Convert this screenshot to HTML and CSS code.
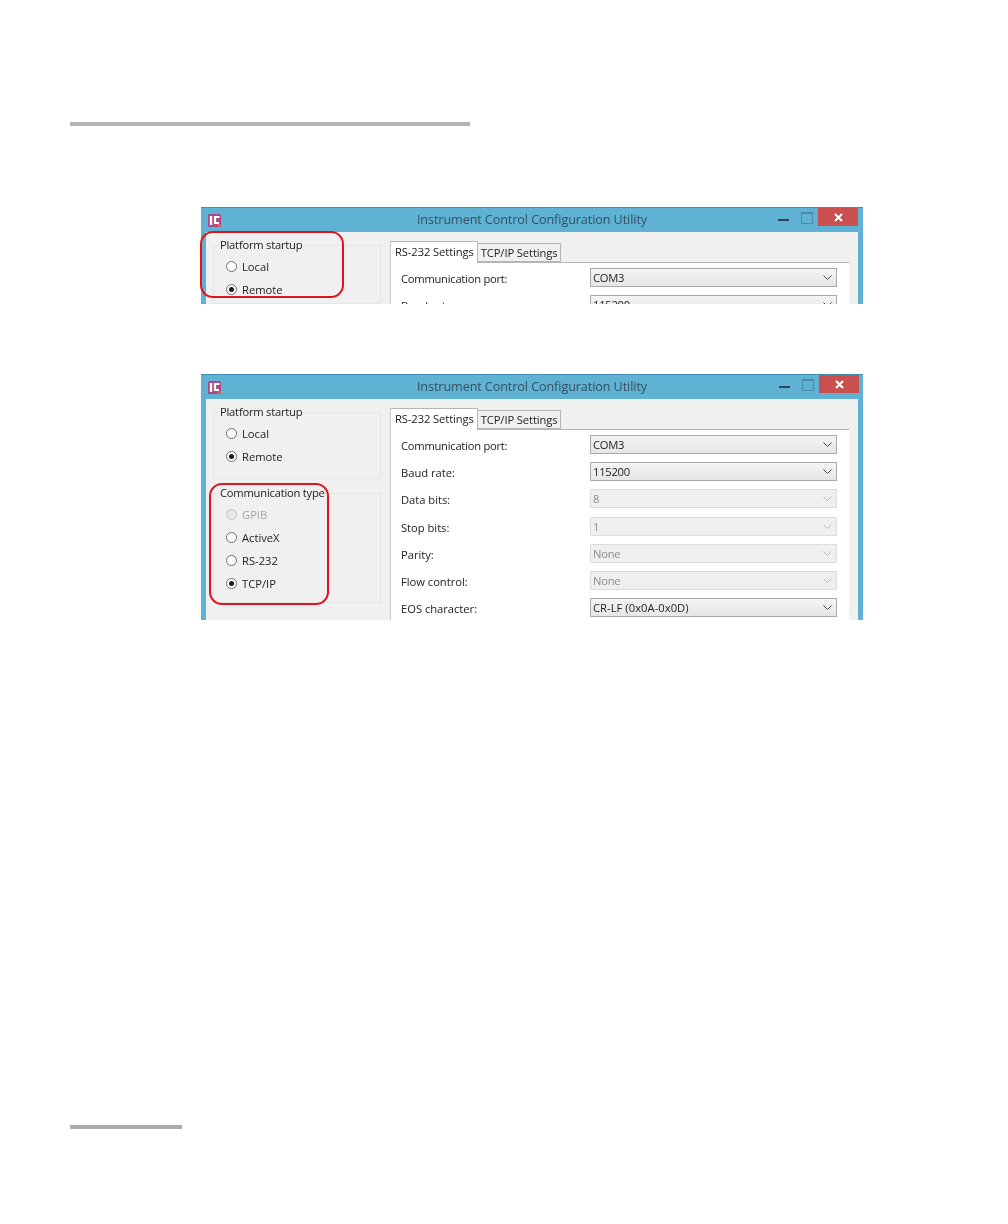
FILE: index.html
```html
<!DOCTYPE html>
<html lang="en">
<head>
<meta charset="utf-8">
<title>Instrument Control Configuration Utility</title>
<link rel="stylesheet" href="styles.css">
</head>
<body>
<main class="page">
  <div class="rule rule-top"></div>

  <section class="window window-short">
    <header class="titlebar">
      <svg class="app-icon" viewBox="0 0 13 13"><rect width="13" height="13" rx="1.5" fill="#a84a86"/><path d="M3 2v9" stroke="#fff" stroke-width="2.4"/><path d="M11.5 3H7v6h4" stroke="#fff" stroke-width="2.2" fill="none"/><circle cx="11" cy="11" r="1.6" fill="#e8703a"/></svg>
      <span class="title">Instrument Control Configuration Utility</span>
      <div class="controls">
        <span class="ctl ctl-min"></span>
        <span class="ctl ctl-max"></span>
        <span class="ctl-close"><svg viewBox="0 0 9 9" width="9" height="9"><path d="M1 1l7 7M8 1L1 8" stroke="#fff" stroke-width="2"/></svg></span>
      </div>
    </header>
    <div class="content">
      <div class="side">
        <fieldset class="group group-platform">
          <legend>Platform startup</legend>
          <div class="radio"><i class="dot"></i>Local</div>
          <div class="radio"><i class="dot on"></i>Remote</div>
        </fieldset>
      </div>
      <div class="tabs">
        <div class="tabstrip">
          <span class="tab active">RS-232 Settings</span>
          <span class="tab">TCP/IP Settings</span>
        </div>
        <div class="panel">
          <div class="row"><label class="tight">Communication port:</label><div class="select">COM3<svg class="chev" viewBox="0 0 9 5"><path d="M.5.5l4 4 4-4" fill="none" stroke="#444"/></svg></div></div>
          <div class="row"><label>Baud rate:</label><div class="select">115200<svg class="chev" viewBox="0 0 9 5"><path d="M.5.5l4 4 4-4" fill="none" stroke="#444"/></svg></div></div>
        </div>
      </div>
    </div>
    <div class="callout callout-a"></div>
  </section>

  <section class="window window-tall">
    <header class="titlebar">
      <svg class="app-icon" viewBox="0 0 13 13"><rect width="13" height="13" rx="1.5" fill="#a84a86"/><path d="M3 2v9" stroke="#fff" stroke-width="2.4"/><path d="M11.5 3H7v6h4" stroke="#fff" stroke-width="2.2" fill="none"/><circle cx="11" cy="11" r="1.6" fill="#e8703a"/></svg>
      <span class="title">Instrument Control Configuration Utility</span>
      <div class="controls">
        <span class="ctl ctl-min"></span>
        <span class="ctl ctl-max"></span>
        <span class="ctl-close"><svg viewBox="0 0 9 9" width="9" height="9"><path d="M1 1l7 7M8 1L1 8" stroke="#fff" stroke-width="2"/></svg></span>
      </div>
    </header>
    <div class="content">
      <div class="side">
        <fieldset class="group group-platform">
          <legend>Platform startup</legend>
          <div class="radio"><i class="dot"></i>Local</div>
          <div class="radio"><i class="dot on"></i>Remote</div>
        </fieldset>
        <fieldset class="group group-comm">
          <legend>Communication type</legend>
          <div class="radio disabled"><i class="dot"></i>GPIB</div>
          <div class="radio"><i class="dot"></i>ActiveX</div>
          <div class="radio"><i class="dot"></i>RS-232</div>
          <div class="radio"><i class="dot on"></i>TCP/IP</div>
        </fieldset>
      </div>
      <div class="tabs">
        <div class="tabstrip">
          <span class="tab active">RS-232 Settings</span>
          <span class="tab">TCP/IP Settings</span>
        </div>
        <div class="panel">
          <div class="row"><label class="tight">Communication port:</label><div class="select">COM3<svg class="chev" viewBox="0 0 9 5"><path d="M.5.5l4 4 4-4" fill="none" stroke="#444"/></svg></div></div>
          <div class="row"><label>Baud rate:</label><div class="select">115200<svg class="chev" viewBox="0 0 9 5"><path d="M.5.5l4 4 4-4" fill="none" stroke="#444"/></svg></div></div>
          <div class="row"><label>Data bits:</label><div class="select off">8<svg class="chev" viewBox="0 0 9 5"><path d="M.5.5l4 4 4-4" fill="none" stroke="#bbb"/></svg></div></div>
          <div class="row"><label>Stop bits:</label><div class="select off">1<svg class="chev" viewBox="0 0 9 5"><path d="M.5.5l4 4 4-4" fill="none" stroke="#bbb"/></svg></div></div>
          <div class="row"><label>Parity:</label><div class="select off">None<svg class="chev" viewBox="0 0 9 5"><path d="M.5.5l4 4 4-4" fill="none" stroke="#bbb"/></svg></div></div>
          <div class="row"><label>Flow control:</label><div class="select off">None<svg class="chev" viewBox="0 0 9 5"><path d="M.5.5l4 4 4-4" fill="none" stroke="#bbb"/></svg></div></div>
          <div class="row"><label>EOS character:</label><div class="select wide">CR-LF (0x0A-0x0D)<svg class="chev" viewBox="0 0 9 5"><path d="M.5.5l4 4 4-4" fill="none" stroke="#444"/></svg></div></div>
        </div>
      </div>
    </div>
    <div class="callout callout-b"></div>
  </section>

  <div class="rule rule-bottom"></div>
</main>
</body>
</html>
```
FILE: styles.css
```css
* { box-sizing: border-box; }
html, body { margin: 0; background: #fff; }
body { font-family: "Open Sans", "Noto Sans", sans-serif; color: #222; }
.page { width: 1008px; height: 1224px; padding: 122px 0 0 70px; display: flex; flex-direction: column; align-items: flex-start; }

.rule { background: #b4b4b4; }
.rule-top { width: 400px; height: 4px; }
.rule-bottom { width: 112px; height: 4px; margin-top: 505px; background: #ababab; }

.window { position: relative; width: 662px; margin-left: 131px; background: #5fb2d3; border-top: 1px solid #3f8fb0; display: flex; flex-direction: column; filter: blur(0.35px); }
.window-short { height: 97px; margin-top: 81px; }
.window-tall { height: 246px; margin-top: 70px; }

.titlebar { height: 24px; flex: none; display: grid; grid-template-columns: 1fr auto 1fr; align-items: center; padding-left: 7px; }
.app-icon { width: 13px; height: 13px; margin-top: 1px; }
.title { font-size: 12.6px; letter-spacing: -0.08px; color: #33505f; margin: -2px 0 0 -7px; }
.controls { justify-self: end; display: flex; align-items: flex-start; align-self: start; height: 18px; }
.window-short .controls { margin-right: 5px; }
.window-tall .controls { margin-right: 4px; }
.ctl { display: block; height: 18px; position: relative; }
.ctl-min { width: 23px; }
.ctl-max { width: 17px; }
.ctl-min::after { content: ""; position: absolute; left: 0; top: 11px; height: 2px; background: #2c4756; width: 11px; }
.ctl-max::after { content: ""; position: absolute; left: 0; top: 4px; width: 10px; height: 9px; border: 1px solid #4d8aa6; border-top-width: 2px; }
.ctl-close { width: 40px; height: 18px; background: #c9504f; display: flex; align-items: center; justify-content: center; }

.content { flex: 1; min-height: 0; margin: 0 5px; background: #f0f0f0; display: flex; overflow: hidden; }
.side { width: 184px; flex: none; padding: 5px 0 0 7px; display: flex; flex-direction: column; gap: 6px; }

.group { margin: 0; padding: 0 0 0 12px; width: 168px; border: 1px solid #e5e5e5; min-width: 0; }
.group legend { font-size: 11.2px; letter-spacing: -0.22px; padding: 0 1px; margin-left: -7px; line-height: 16px; color: #222; }
.group-platform { height: 75px; }
.group-comm { height: 118px; }

.radio { height: 23px; display: flex; align-items: center; font-size: 11.2px; color: #222; }
.group .radio:first-of-type { margin-top: 2px; }
.radio.disabled { color: #a5a5a5; }
.dot { width: 11px; height: 11px; border-radius: 50%; border: 1px solid #6e6e6e; background: #fff; margin-right: 5px; display: flex; align-items: center; justify-content: center; flex: none; }
.dot.on::after { content: ""; width: 5px; height: 5px; border-radius: 50%; background: #1c1c1c; }
.disabled .dot { border-color: #c2c2c2; background: #e8e8e8; }

.tabs { flex: none; width: 459px; padding-top: 8px; }
.tabstrip { display: flex; align-items: flex-end; height: 22px; }
.tab { font-size: 11.2px; letter-spacing: -0.1px; height: 19px; padding: 0 2px 0 3px; line-height: 18px; border: 1px solid #b5b5b5; border-left: 0; background: #f0f0f0; }
.tab.active { height: 22px; padding: 0 3px 0 4px; line-height: 20px; border-left: 1px solid #c8c8c8; border-bottom: 0; background: #fff; position: relative; z-index: 1; margin-bottom: -1px; }
.panel { height: 400px; background: #fff; border-top: 1px solid #b5b5b5; border-left: 1px solid #c8c8c8; padding: 5px 12px 0 10px; }

.row { display: flex; align-items: flex-start; justify-content: space-between; height: 19px; margin-bottom: 8.2px; }
.row label { font-size: 11.2px; letter-spacing: -0.02px; line-height: 19px; padding-top: 1px; color: #222; }
.row label.tight { letter-spacing: -0.25px; }
.select { position: relative; width: 247px; height: 19px; padding-left: 2px; font-size: 11.2px; letter-spacing: -0.25px; line-height: 17px; border: 1px solid #a9a9a9; background: linear-gradient(#f4f4f4, #e6e6e6); color: #222; }
.select.wide { letter-spacing: 0.05px; }
.select.off { border-color: #dcdcdc; background: #efefef; color: #8c8c8c; }
.chev { position: absolute; right: 4px; top: 6px; width: 9px; height: 5px; }

.callout { position: absolute; border: 2px solid #e1141d; border-radius: 13px; pointer-events: none; }
.callout-a { left: -1px; top: 23px; width: 144px; height: 67px; }
.callout-b { left: 8px; top: 108px; width: 120px; height: 122px; }
```
